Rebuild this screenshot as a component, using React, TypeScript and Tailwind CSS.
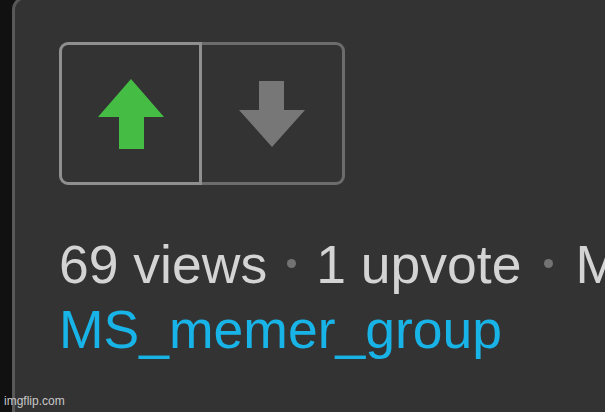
import React from "react";

export default function App() {
  return (
    <div
      className="relative w-[605px] h-[412px] overflow-hidden bg-[#111111]"
      style={{ fontFamily: '"Liberation Sans", Arial, sans-serif' }}
    >
      <div className="ml-[12px] mt-[-4px] h-[420px] rounded-tl-[14px] border-l-[3px] border-t-[3px] border-[#585858] bg-[#333333] pl-[44px] pt-[43px]">
        <div className="flex h-[143px] w-[286px]">
          <div className="flex h-full w-[143px] items-center justify-center rounded-l-[9px] border-[3px] border-[#8f8f8f]">
            <svg width="66" height="70" viewBox="0 0 66 70" className="ml-[1px]">
              <polygon points="33,0 66,38 46,38 46,70 21,70 21,38 0,38" fill="#45bd45" />
            </svg>
          </div>
          <div className="flex h-full w-[143px] items-center justify-center rounded-r-[9px] border-y-[3px] border-r-[3px] border-[#6c6c6c]">
            <svg width="66" height="66" viewBox="0 0 66 66" className="mt-[1px] mr-[1px]">
              <polygon points="20,0 45,0 45,29 66,29 33,66 0,29 20,29" fill="#777777" />
            </svg>
          </div>
        </div>
        <div className="mt-[47px] whitespace-nowrap text-[53.5px] leading-[65px]">
          <div className="text-[#d4d4d4]">
            69 views
            <span className="mx-[20px] mb-[15px] inline-block h-[9px] w-[9px] rounded-full bg-[#737373]" />
            1 upvote
            <span className="ml-[23px] mr-[22px] mb-[15px] inline-block h-[9px] w-[9px] rounded-full bg-[#737373]" />
            MS_memer_group
          </div>
          <div className="text-[#18b4e8]">MS_memer_group</div>
        </div>
      </div>
      <div className="absolute left-[4px] top-[394px] text-[12px] leading-[14px] text-[#c8c8c8]">
        imgflip.com
      </div>
    </div>
  );
}
